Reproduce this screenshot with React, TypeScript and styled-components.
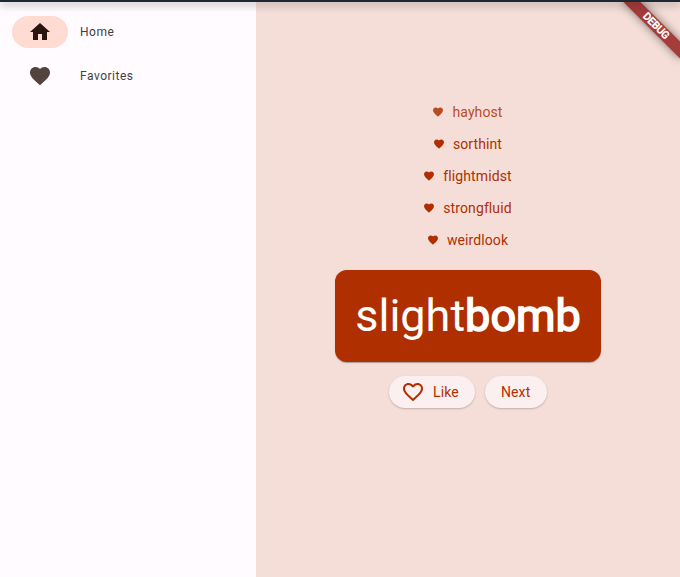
import React from 'react';
import styled, { createGlobalStyle } from 'styled-components';

const Global = createGlobalStyle`
  * { box-sizing: border-box; }
  html, body { margin: 0; padding: 0; overflow: hidden; }
  body { font-family: Roboto, sans-serif; }
`;

const Window = styled.div`
  display: flex;
  flex-direction: column;
  width: 100vw;
  height: 100vh;
  overflow: hidden;
`;

const TitleEdge = styled.div`
  position: relative;
  z-index: 2;
  flex: 0 0 2px;
  background: #1c2834;
  box-shadow: 0 2px 8px rgba(0, 0, 0, 0.6);
`;

const Body = styled.div`
  position: relative;
  display: flex;
  flex: 1;
  min-height: 0;
  overflow: hidden;
`;

const Rail = styled.nav`
  display: flex;
  flex-direction: column;
  gap: 12px;
  width: 256px;
  padding: 14px 12px;
  background: #fffbff;
`;

const Destination = styled.div`
  display: flex;
  align-items: center;
  gap: 12px;
  height: 32px;
  font-size: 12px;
  line-height: 16px;
  letter-spacing: 0.52px;
  color: #453f3e;
`;

const Indicator = styled.div<{ $selected?: boolean }>`
  display: flex;
  align-items: center;
  justify-content: center;
  width: 56px;
  height: 32px;
  border-radius: 16px;
  background: ${(p) => (p.$selected ? '#ffdbd1' : 'transparent')};
  color: ${(p) => (p.$selected ? '#2c150f' : '#53433f')};
`;

const Icon = styled.svg<{ $size: number }>`
  display: block;
  flex: none;
  width: ${(p) => p.$size}px;
  height: ${(p) => p.$size}px;
  fill: currentColor;
`;

const Content = styled.main`
  display: flex;
  flex: 1;
  flex-direction: column;
  align-items: center;
  padding-top: 94px;
  background: #f5ded8;
  color: #b02f00;
`;

const History = styled.div`
  display: flex;
  flex-direction: column;
  align-items: center;
`;

const HistoryRow = styled.div<{ $opacity: number }>`
  display: flex;
  align-items: center;
  gap: 8px;
  height: 32px;
  padding-right: 1px;
  font-size: 14px;
  line-height: 20px;
  letter-spacing: 0.1px;
  opacity: ${(p) => p.$opacity};
`;

const WordCard = styled.div`
  display: flex;
  align-items: center;
  justify-content: center;
  width: 266px;
  height: 92px;
  margin-top: 14px;
  border-radius: 12px;
  background: #b02f00;
  color: #fff;
  font-size: 45px;
  line-height: 52px;
  box-shadow: 0 0.5px 1px rgba(0, 0, 0, 0.3);
`;

const Strong = styled.span`
  -webkit-text-stroke: 1.6px #fff;
`;

const Actions = styled.div`
  display: flex;
  gap: 10px;
  margin-top: 14px;
`;

const Button = styled.button`
  display: flex;
  align-items: center;
  gap: 8px;
  height: 32px;
  padding: 0 16px;
  border: 0;
  border-radius: 16px;
  background: #fbeff0;
  color: #b02f00;
  font: 400 14px/20px Roboto, sans-serif;
  letter-spacing: 0.1px;
  white-space: nowrap;
  box-shadow: 0 1px 2px rgba(0, 0, 0, 0.22);
`;

const LikeButton = styled(Button)`
  width: 86px;
  padding: 0 0 0 12px;
`;

const NextButton = styled(Button)`
  width: 62px;
`;

const Ribbon = styled.div`
  position: absolute;
  top: 28px;
  right: -40px;
  width: 80px;
  height: 12px;
  transform-origin: 40px -28px;
  transform: rotate(45deg);
  background: #a43c3a;
  color: #fff;
  font-size: 10.2px;
  line-height: 12px;
  text-align: center;
  -webkit-text-stroke: 0.6px #fff;
  box-shadow: 0 0 10px rgba(0, 0, 0, 0.5);
`;

const HEART =
  'M12 21.35l-1.45-1.32C5.4 15.36 2 12.28 2 8.5 2 5.42 4.42 3 7.5 3c1.74 0 3.41.81 4.5 2.09C13.09 3.81 14.76 3 16.5 3 19.58 3 22 5.42 22 8.5c0 3.78-3.4 6.86-8.55 11.54L12 21.35z';
const HEART_OUTLINE =
  'M16.5 3c-1.74 0-3.41.81-4.5 2.09C10.91 3.81 9.24 3 7.5 3 4.42 3 2 5.42 2 8.5c0 3.78 3.4 6.86 8.55 11.54L12 21.35l1.45-1.32C18.6 15.36 22 12.28 22 8.5 22 5.42 19.58 3 16.5 3zm-4.4 15.55l-.1.1-.1-.1C7.14 14.24 4 11.39 4 8.5 4 6.5 5.5 5 7.5 5c1.54 0 3.04.99 3.57 2.36h1.87C13.46 5.99 14.96 5 16.5 5c2 0 3.5 1.5 3.5 3.5 0 2.89-3.14 5.74-7.9 10.05z';
const HOME = 'M10 20v-6h4v6h5v-8h3L12 3 2 12h3v8z';

const Glyph = ({ d, size }: { d: string; size: number }) => (
  <Icon $size={size} viewBox="0 0 24 24" aria-hidden="true">
    <path d={d} />
  </Icon>
);

const history = [
  { word: 'hayhost', opacity: 0.84 },
  { word: 'sorthint', opacity: 1 },
  { word: 'flightmidst', opacity: 1 },
  { word: 'strongfluid', opacity: 1 },
  { word: 'weirdlook', opacity: 1 },
];

export default function App() {
  return (
    <Window>
      <Global />
      <TitleEdge />
      <Body>
        <Rail>
          <Destination>
            <Indicator $selected>
              <Glyph d={HOME} size={24} />
            </Indicator>
            Home
          </Destination>
          <Destination>
            <Indicator>
              <Glyph d={HEART} size={24} />
            </Indicator>
            Favorites
          </Destination>
        </Rail>
        <Content>
          <History>
            {history.map(({ word, opacity }) => (
              <HistoryRow key={word} $opacity={opacity}>
                <Glyph d={HEART} size={12} />
                {word}
              </HistoryRow>
            ))}
          </History>
          <WordCard>
            <span>slight</span>
            <Strong>bomb</Strong>
          </WordCard>
          <Actions>
            <LikeButton>
              <Glyph d={HEART_OUTLINE} size={24} />
              Like
            </LikeButton>
            <NextButton>Next</NextButton>
          </Actions>
        </Content>
        <Ribbon>DEBUG</Ribbon>
      </Body>
    </Window>
  );
}
